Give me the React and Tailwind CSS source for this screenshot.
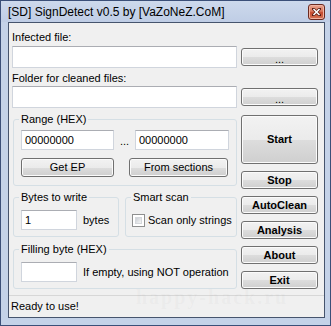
const btn =
  "flex items-center justify-center rounded-[3px] border border-[#707070] bg-[linear-gradient(to_bottom,#f2f2f2_0%,#ebebeb_50%,#dddddd_50%,#cfcfcf_100%)] shadow-[inset_0_0_0_1px_#fbfbfb] text-black";
const input =
  "bg-white border border-[#d0d5dd] border-t-[#abadb3] px-[3px] flex items-center";
const group = "rounded-[3px] border border-[#d5dfe5] px-[7px] min-w-0";

const CloseButton = () => (
  <div className="w-[17px] h-[16px] rounded-[3px] border border-[#6b2a20] bg-[linear-gradient(to_bottom,#eaa590_0%,#d9775c_45%,#c4492e_55%,#d77657_100%)] shadow-[inset_0_0_0_1px_#f0b4a2] flex items-center justify-center">
    <svg width="9" height="8" viewBox="0 0 9 8">
      <path d="M1 0.5 L8 7.5 M8 0.5 L1 7.5" stroke="#5a1c12" strokeWidth="3" strokeLinecap="square" />
      <path d="M1.5 1 L7.5 7 M7.5 1 L1.5 7" stroke="#ffffff" strokeWidth="1.6" />
    </svg>
  </div>
);

export default function App() {
  return (
    <div className="relative w-[331px] h-[326px] overflow-hidden bg-[#c4d2e8] border border-[#3b4f78] flex flex-col font-['Liberation_Sans',Arial,sans-serif] text-[11px] text-black">
      <div className="h-[21px] flex items-center justify-between pl-[7px] pr-[5px] pt-[1px] bg-[linear-gradient(to_bottom,#cdd9ec,#bfcde5)]">
        <span className="text-[12px] leading-[14px] text-black">[SD] SignDetect v0.5 by [VaZoNeZ.CoM]</span>
        <CloseButton />
      </div>

      <div className="ml-[7px] mr-[5px] mb-[7px] flex-1 border border-[#46546d] bg-[#f0f0f0] flex flex-col">
        <div className="pl-[3px] pt-[7px] flex flex-col">
          <div className="h-[14px] leading-[14px]">Infected file:</div>
          <div className="flex mt-[2px]">
            <div className={`${input} w-[225px] h-[22px]`} />
            <button className={`${btn} ml-[4px] mt-[2px] w-[77px] h-[18px] leading-none pt-[4px]`}>...</button>
          </div>
          <div className="h-[14px] leading-[14px] mt-[3px]">Folder for cleaned files:</div>
          <div className="flex mt-[1px]">
            <div className={`${input} w-[225px] h-[22px]`} />
            <button className={`${btn} ml-[4px] mt-[2px] w-[77px] h-[18px] leading-none pt-[4px]`}>...</button>
          </div>

          <div className="flex mt-[5px]">
            <div className="ml-[1px] w-[224px] flex flex-col">
              <fieldset className={`${group} pb-[8px]`}>
                <legend className="-ml-[2px] px-[2px] leading-[13px]">Range (HEX)</legend>
                <div className="flex mt-[4px]">
                  <div className={`${input} w-[93px] h-[20px]`}>00000000</div>
                  <div className="w-[21px] flex items-end justify-center pb-[3px] leading-none">...</div>
                  <div className={`${input} w-[94px] h-[20px]`}>00000000</div>
                </div>
                <div className="flex mt-[8px]">
                  <button className={`${btn} w-[93px] h-[19px]`}>Get EP</button>
                  <button className={`${btn} ml-[15px] w-[99px] h-[19px]`}>From sections</button>
                </div>
              </fieldset>

              <div className="flex mt-[5px]">
                <fieldset className={`${group} w-[106px] pb-[6px]`}>
                  <legend className="-ml-[2px] px-[2px] leading-[13px]">Bytes to write</legend>
                  <div className="flex items-center mt-[6px]">
                    <div className={`${input} w-[56px] h-[20px]`}>1</div>
                    <span className="ml-[6px]">bytes</span>
                  </div>
                </fieldset>
                <fieldset className={`${group} ml-[6px] w-[112px] pb-[6px] !px-[6px]`}>
                  <legend className="-ml-[1px] px-[2px] leading-[13px]">Smart scan</legend>
                  <div className="flex items-center mt-[6px] h-[20px] whitespace-nowrap">
                    <div className="shrink-0 w-[13px] h-[13px] border border-[#8e8f8f] bg-white p-[2px]">
                      <div className="w-full h-full bg-[linear-gradient(135deg,#cbcfd5,#f6f6f6)] border border-[#d5d8dc]" />
                    </div>
                    <span className="ml-[3px]">Scan only strings</span>
                  </div>
                </fieldset>
              </div>

              <fieldset className={`${group} mt-[6px] pb-[6px]`}>
                <legend className="-ml-[2px] px-[2px] leading-[13px]">Filling byte (HEX)</legend>
                <div className="flex items-center mt-[6px]">
                  <div className={`${input} w-[56px] h-[20px]`} />
                  <span className="ml-[6px]">If empty, using NOT operation</span>
                </div>
              </fieldset>
            </div>

            <div className="ml-[4px] mt-[2px] w-[77px] flex flex-col gap-[7px] font-bold">
              <button className={`${btn} h-[49px]`}>Start</button>
              <button className={`${btn} h-[18px]`}>Stop</button>
              <button className={`${btn} h-[18px]`}>AutoClean</button>
              <button className={`${btn} h-[18px]`}>Analysis</button>
              <button className={`${btn} h-[18px]`}>About</button>
              <button className={`${btn} h-[18px]`}>Exit</button>
            </div>
          </div>
        </div>

        <div className="flex-1" />
        <div className="h-[22px] border-t border-[#d7d7d7] pl-[2px] flex items-center">Ready to use!</div>
      </div>

      <div className="pointer-events-none absolute left-[135px] top-[281px] text-[20px] font-bold tracking-[2px] font-['Liberation_Serif',serif] text-[rgba(160,160,160,0.07)]">
        happy-hack.ru
      </div>
    </div>
  );
}
